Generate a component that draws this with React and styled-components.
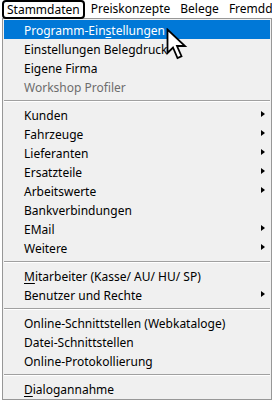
import styled, { createGlobalStyle } from 'styled-components';

const Global = createGlobalStyle`
  html, body {
    margin: 0;
    padding: 0;
    background: #ffffff;
  }
  body {
    font-family: "Noto Sans", "Open Sans", sans-serif;
    font-size: 12px;
    color: #000;
  }
`;

const Screen = styled.div`
  position: relative;
  width: 272px;
  height: 400px;
  overflow: hidden;
  background: #fff;
`;

const MenuBar = styled.div`
  display: flex;
  align-items: flex-start;
  height: 18px;
  white-space: nowrap;
`;

const BarItem = styled.div`
  box-sizing: border-box;
  flex-shrink: 0;
  height: 18px;
  line-height: 18px;
  padding: 0 4px 0 6px;
`;

const FocusedItem = styled(BarItem)`
  height: 19px;
  line-height: 15px;
  margin: 0 0 0 2px;
  padding: 0 3px;
  border: 2px solid #000;
  border-radius: 4px;
`;

const Panel = styled.div`
  box-sizing: border-box;
  margin-left: 2px;
  background: #f0f0f0;
  border: 1px solid #979797;
  padding: 1px;
  height: 382px;
`;

const Item = styled.div`
  position: relative;
  box-sizing: border-box;
  display: flex;
  align-items: center;
  height: 19px;
  padding: 1px 0 0 20px;
  background: ${p => (p.$active ? '#0078d7' : 'transparent')};
  color: ${p => (p.$active ? '#fff' : p.$disabled ? '#6d6d6d' : '#000')};
  white-space: nowrap;

  & u {
    text-decoration: underline;
    text-underline-offset: 2px;
  }
`;

const SubArrow = styled.span`
  position: absolute;
  right: 5px;
  top: 6px;
  width: 0;
  height: 0;
  border-top: 3.5px solid transparent;
  border-bottom: 3.5px solid transparent;
  border-left: 4px solid #000;
`;

const Separator = styled.div`
  height: 9px;
  display: flex;
  align-items: center;

  &::before {
    content: '';
    flex: 1;
    height: 0;
    border-top: 1px solid #a0a0a0;
    border-bottom: 1px solid #ffffff;
  }
`;

const Cursor = styled.svg`
  position: absolute;
  left: 166px;
  top: 28px;
`;

const entries = [
  { label: <>Programm-Ein<u>s</u>tellungen</>, active: true },
  { label: 'Einstellungen Belegdruck' },
  { label: 'Eigene Firma' },
  { label: 'Workshop Profiler', disabled: true },
  'sep',
  { label: 'Kunden', sub: true },
  { label: 'Fahrzeuge', sub: true },
  { label: 'Lieferanten', sub: true },
  { label: 'Ersatzteile', sub: true },
  { label: 'Arbeitswerte', sub: true },
  { label: 'Bankverbindungen' },
  { label: 'EMail', sub: true },
  { label: 'Weitere', sub: true },
  'sep',
  { label: <><u>M</u>itarbeiter (Kasse/ AU/ HU/ SP)</> },
  { label: 'Benutzer und Rechte', sub: true },
  'sep',
  { label: 'Online-Schnittstellen (Webkataloge)' },
  { label: 'Datei-Schnittstellen' },
  { label: 'Online-Protokollierung' },
  'sep',
  { label: <><u>D</u>ialogannahme</> },
];

const App = () => {
  return (
    <Screen>
      <Global />
      <MenuBar>
        <FocusedItem>Stammdaten</FocusedItem>
        <BarItem>Preiskonzepte</BarItem>
        <BarItem>Belege</BarItem>
        <BarItem>Fremddaten</BarItem>
      </MenuBar>
      <Panel>
        {entries.map((e, i) =>
          e === 'sep' ? (
            <Separator key={i} />
          ) : (
            <Item key={i} $active={e.active} $disabled={e.disabled}>
              {e.label}
              {e.sub && <SubArrow />}
            </Item>
          )
        )}
      </Panel>
      <Cursor width="26" height="34" viewBox="0 0 26 34">
        <path
          d="M1.5 1.5 L1.5 25 L7 19.5 L11.5 30 L15.5 28.2 L11 18 L19 18 Z"
          fill="#fff"
          stroke="#000"
          strokeWidth="1.8"
          strokeLinejoin="miter"
        />
      </Cursor>
    </Screen>
  );
};

export default App;
